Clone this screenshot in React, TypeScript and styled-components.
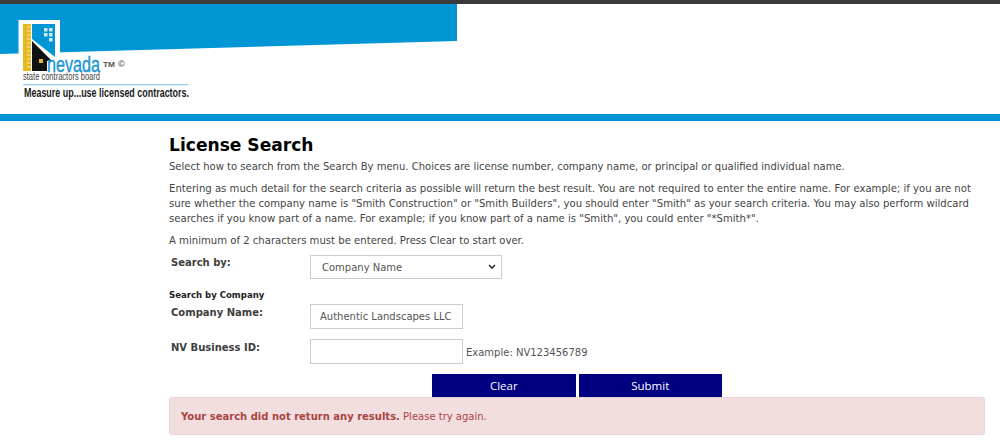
import styled, { createGlobalStyle } from "styled-components";

const GlobalStyle = createGlobalStyle`
  html, body {
    margin: 0;
    padding: 0;
    background: #fff;
    font-family: "DejaVu Sans", Verdana, sans-serif;
    font-size: 10.04px;
    color: #444;
  }
`;

const TopLine = styled.div`
  height: 4px;
  background: #3b3b3d;
`;
const Header = styled.header`
  position: relative;
  height: 110px;
  border-bottom: 7px solid #0096d6;
  &::before {
    content: "";
    position: absolute;
    left: 0;
    top: 0;
    width: 457px;
    height: 50px;
    background: #0096d6;
    clip-path: polygon(0 0, 100% 0, 100% 74%, 0 100%);
  }
`;
const LogoSvg = styled.svg`
  position: relative;
  display: block;
`;
const Main = styled.main`
  margin: 0 15px 0 169px;
  padding-top: 13px;
`;
const Title = styled.h1`
  margin: 0;
  font-size: 17.1px;
  line-height: 22px;
  font-weight: 700;
  color: #000;
`;
const Text = styled.p`
  margin: 0 0 7px;
  font-size: 10.1px;
  line-height: 15px;
`;
const Intro = styled(Text)`
  margin-top: 3px;
  font-size: 10.04px;
`;
const FormRow = styled.div<{ $h: number; $labelTop?: number }>`
  display: flex;
  height: ${(p) => p.$h}px;
  padding-left: 2px;
  label {
    padding-top: ${(p) => p.$labelTop ?? 0}px;
  }
`;
const Label = styled.label`
  width: 139px;
  flex: none;
  font-weight: 700;
  font-size: 10px;
  line-height: 15px;
  color: #3d3d3d;
`;
const Select = styled.select`
  width: 192px;
  height: 24px;
  box-sizing: border-box;
  border: 1px solid #ccc;
  appearance: none;
  background: #fff url("data:image/svg+xml,%3Csvg xmlns='http://www.w3.org/2000/svg' width='8' height='6'%3E%3Cpath d='M1 1l3 3 3-3' fill='none' stroke='%23333' stroke-width='1.6'/%3E%3C/svg%3E") no-repeat right 5px center;
  color: #555;
  padding-left: 11px;
  font-family: inherit;
  font-size: 10px;
`;
const Input = styled.input`
  width: 153px;
  height: 25px;
  box-sizing: border-box;
  border: 1px solid #ccc;
  padding: 0 9px;
  color: #555;
  font-family: inherit;
  font-size: 10px;
`;
const SubHeading = styled.div`
  height: 16px;
  line-height: 15px;
  font-size: 8.55px;
  font-weight: 700;
  color: #222;
`;
const Hint = styled.span`
  margin-left: 3px;
  line-height: 27px;
  font-size: 10px;
  color: #555;
`;
const Buttons = styled.div`
  display: flex;
  gap: 3px;
  padding-left: 263px;
`;
const Button = styled.button`
  width: 143.5px;
  height: 23px;
  padding: 0;
  border: 0;
  background: #000080;
  color: #fff;
  font-family: "Open Sans", sans-serif;
  font-size: 11.5px;
`;
const Alert = styled.div`
  height: 38px;
  box-sizing: border-box;
  padding: 0 11px;
  line-height: 37px;
  border-radius: 3px;
  background: #f2dede;
  border: 1px solid #ebd3d5;
  font-size: 10px;
  color: #a94442;
`;

const Logo = () => (
  <LogoSvg width="260" height="110" viewBox="0 4 260 110">
    <polygon points="18.5,20 60,20 60,58 47,58 47,72 18.5,72" fill="#fff" />
    <rect x="23" y="24" width="8" height="47" fill="#e8b91e" />
    <path
      d="M27 27h4M27 31h4M27 35h4M27 39h4M27 43h4M27 47h4M27 51h4M27 55h4M27 59h4M27 63h4M27 67h4"
      stroke="#fff3c4"
      strokeWidth="0.8"
    />
    <polygon points="32,24 55,24 55,57 32,39" fill="#0096d6" />
    <g fill="#cfe9f7">
      <rect x="44" y="28" width="3.5" height="3.5" />
      <rect x="49" y="28" width="3.5" height="3.5" />
      <rect x="44" y="33" width="3.5" height="3.5" />
      <rect x="49" y="33" width="3.5" height="3.5" />
      <rect x="49" y="38" width="3.5" height="3.5" />
    </g>
    <polygon points="32,41 52,61 47,61 47,71 32,71" fill="#111" />
    <rect x="39" y="59" width="4" height="4" fill="#e8b91e" />
    <text transform="translate(47 72) scale(0.735 1)" fontFamily="Liberation Sans" fontSize="22" stroke="#1a96d4" strokeWidth="0.4" fill="#1a96d4">
      nevada
    </text>
    <text x="103" y="67" fontFamily="Liberation Sans" fontSize="7" fontWeight="700" fill="#555" textLength="12" lengthAdjust="spacingAndGlyphs">
      TM
    </text>
    <text x="118" y="67" fontFamily="Liberation Sans" fontSize="9" fontWeight="700" fill="#666">
      ©
    </text>
    <text x="23" y="80" fontFamily="Liberation Sans" fontSize="11" fill="#444" textLength="77" lengthAdjust="spacingAndGlyphs">
      state contractors board
    </text>
    <rect x="23" y="84" width="165" height="1.2" fill="#8fcdec" />
    <text x="24" y="97" fontFamily="Liberation Sans" fontSize="12" fontWeight="700" fill="#1b1b1b" textLength="165" lengthAdjust="spacingAndGlyphs">
      Measure up...use licensed contractors.
    </text>
  </LogoSvg>
);

export default function App() {
  return (
    <>
      <GlobalStyle />
      <TopLine />
      <Header>
        <Logo />
      </Header>
      <Main>
        <Title>License Search</Title>
        <Intro>
          Select how to search from the Search By menu. Choices are license number, company name, or principal or
          qualified individual name.
        </Intro>
        <Text>
          Entering as much detail for the search criteria as possible will return the best result. You are not required
          to enter the entire name. For example; if you are not sure whether the company name is "Smith Construction" or
          "Smith Builders", you should enter "Smith" as your search criteria. You may also perform wildcard searches if
          you know part of a name. For example; if you know part of a name is "Smith", you could enter "*Smith*".
        </Text>
        <Text>A minimum of 2 characters must be entered. Press Clear to start over.</Text>
        <FormRow $h={33}>
          <Label>Search by:</Label>
          <Select defaultValue="company">
            <option value="company">Company Name</option>
          </Select>
        </FormRow>
        <SubHeading>Search by Company</SubHeading>
        <FormRow $h={35} $labelTop={1}>
          <Label>Company Name:</Label>
          <Input defaultValue="Authentic Landscapes LLC" />
        </FormRow>
        <FormRow $h={35} $labelTop={1}>
          <Label>NV Business ID:</Label>
          <Input />
          <Hint>Example: NV123456789</Hint>
        </FormRow>
        <Buttons>
          <Button>Clear</Button>
          <Button>Submit</Button>
        </Buttons>
        <Alert>
          <b>Your search did not return any results.</b> Please try again.
        </Alert>
      </Main>
    </>
  );
}
